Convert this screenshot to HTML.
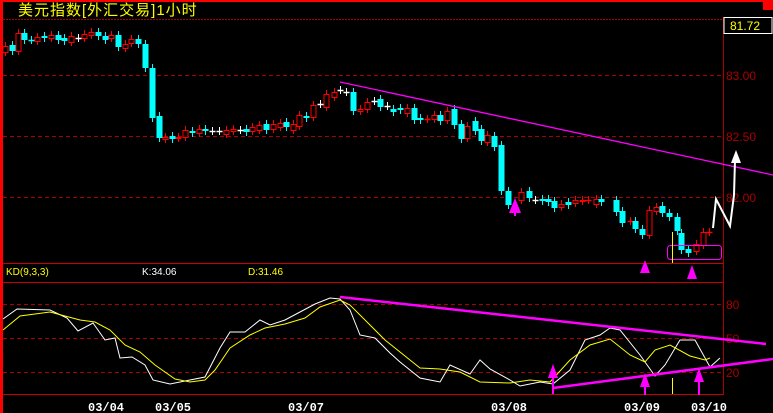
<!DOCTYPE html>
<html><head><meta charset="utf-8"><style>
html,body{margin:0;padding:0;background:#000;width:773px;height:413px;overflow:hidden}
svg{display:block}
</style></head><body>
<svg id="s" width="773" height="413" xmlns="http://www.w3.org/2000/svg" font-family="Liberation Sans, sans-serif">
<rect width="773" height="413" fill="#000"/>
<rect x="0" y="0" width="773" height="2" fill="#f00"/>
<rect x="763" y="0" width="10" height="10" fill="#f00"/>
<rect x="0" y="0" width="3" height="413" fill="#f00"/>
<text x="18" y="15" fill="#ff0" font-size="15" letter-spacing="1" font-family="Liberation Sans, Noto Sans CJK SC, sans-serif">美元指数[外汇交易]1小时</text>
<line x1="3" y1="19.5" x2="723" y2="19.5" stroke="#a00" stroke-dasharray="2,1"/>
<line x1="723.5" y1="17" x2="723.5" y2="395" stroke="#a00"/>
<rect x="724" y="17.5" width="48" height="16" fill="#000" stroke="#fff"/>
<text x="730" y="30" fill="#ff0" font-size="12">81.72</text>
<g stroke="#a00" stroke-dasharray="4,3">
<line x1="3" y1="75.5" x2="723" y2="75.5"/>
<line x1="3" y1="136.5" x2="723" y2="136.5"/>
<line x1="3" y1="197.5" x2="723" y2="197.5"/>
<line x1="3" y1="304.5" x2="723" y2="304.5"/>
<line x1="3" y1="338.5" x2="723" y2="338.5"/>
<line x1="3" y1="372.5" x2="723" y2="372.5"/>
</g>
<g fill="#a00" font-size="12">
<text x="726" y="80">83.00</text><text x="726" y="141">82.50</text><text x="726" y="202">82.00</text>
<text x="726" y="309">80</text><text x="726" y="343">50</text><text x="726" y="377">20</text>
</g>
<line x1="3" y1="263.5" x2="723" y2="263.5" stroke="#c00"/>
<line x1="3" y1="282.5" x2="723" y2="282.5" stroke="#c00"/>
<line x1="3" y1="394.5" x2="723" y2="394.5" stroke="#c00"/>
<text x="6" y="275" fill="#ff0" font-size="10">KD(9,3,3)</text>
<text x="142" y="275" fill="#fff" font-size="10">K:34.06</text>
<text x="248" y="275" fill="#ff0" font-size="10">D:31.46</text>
<g fill="#fff" font-size="12" font-weight="bold" font-family="Liberation Mono, monospace">
<text x="88" y="411">03/04</text><text x="155" y="411">03/05</text><text x="288" y="411">03/07</text>
<text x="491" y="411">03/08</text><text x="624" y="411">03/09</text><text x="691" y="411">03/10</text>
</g>
<g id="c"></g>
<line x1="340" y1="82" x2="773" y2="175" stroke="#f0f" stroke-width="1.3"/>
<polyline points="713,228 716,199 730,226 734,195 735,160" fill="none" stroke="#fff" stroke-width="2"/>
<polygon points="736,150 731,163 741,163" fill="#fff"/>
<rect x="667.5" y="245.5" width="54" height="14" rx="3" fill="none" stroke="#f0f"/>
<line x1="672.5" y1="232" x2="672.5" y2="263" stroke="#ff0"/>
<line x1="672.5" y1="378" x2="672.5" y2="394" stroke="#ff0"/>
<g fill="#f0f">
<polygon points="515,198 509,213 521,213"/><rect x="514" y="210" width="2" height="6"/>
<polygon points="645,260 640,273 650,273"/>
<polygon points="692,265 687,279 697,279"/>
</g>
<polyline id="K" fill="none" stroke="#fff" stroke-width="1"/>
<polyline id="D" fill="none" stroke="#ff0" stroke-width="1"/>
<line x1="340" y1="297" x2="766" y2="344" stroke="#f0f" stroke-width="2.5"/>
<line x1="553" y1="388" x2="773" y2="359" stroke="#f0f" stroke-width="2.5"/>
<g fill="#f0f">
<polygon points="553,364 548,378 558,378"/><rect x="552" y="377" width="2" height="17"/>
<polygon points="645,373 640,387 650,387"/><rect x="644" y="386" width="2" height="9"/>
<polygon points="699,368 694,382 704,382"/><rect x="698" y="381" width="2" height="14"/>
</g>
</svg>
<script>
var C=[[5,52,46,'r'],[12,51,45,'c'],[18,51,33,'r'],[24,33,40,'c'],[31,40,40,'c'],[37,41,37,'r'],[44,36,38,'c'],[51,38,35,'r'],[58,35,40,'c'],[64,38,41,'c'],[71,42,36,'r'],[78,38,38,'w'],[84,38,34,'r'],[91,35,32,'r'],[98,32,36,'c'],[105,36,40,'c'],[111,38,35,'r'],[118,35,47,'c'],[125,48,44,'r'],[131,43,39,'r'],[138,39,44,'c'],[145,44,68,'c'],[152,68,118,'c'],[159,116,138,'c'],[165,139,137,'r'],[172,136,139,'c'],[178,138,137,'r'],[185,137,130,'r'],[192,131,133,'c'],[199,133,129,'r'],[205,129,131,'c'],[212,131,131,'w'],[219,131,131,'w'],[226,134,130,'r'],[233,131,129,'r'],[240,130,130,'w'],[246,129,132,'c'],[252,131,127,'r'],[259,130,125,'r'],[266,124,130,'c'],[273,129,124,'r'],[280,127,123,'r'],[286,122,127,'c'],[293,130,124,'r'],[299,126,115,'r'],[306,116,118,'c'],[313,117,105,'r'],[320,104,104,'w'],[326,107,94,'r'],[334,97,92,'r'],[340,90,90,'w'],[346,92,92,'w'],[353,92,111,'c'],[360,111,109,'r'],[367,109,102,'r'],[374,101,101,'w'],[380,99,107,'c'],[387,106,106,'w'],[393,109,112,'c'],[400,108,110,'c'],[407,113,108,'r'],[414,108,120,'c'],[420,118,120,'c'],[427,119,119,'r'],[434,119,115,'r'],[440,115,121,'c'],[447,120,111,'r'],[454,109,125,'c'],[461,124,139,'c'],[467,138,126,'r'],[475,121,131,'c'],[481,129,141,'c'],[487,142,135,'r'],[494,136,147,'c'],[501,145,191,'c'],[508,191,205,'c'],[521,200,192,'r'],[529,191,198,'c'],[535,200,200,'w'],[542,199,201,'c'],[548,199,202,'c'],[554,201,208,'c'],[561,207,204,'r'],[568,202,205,'c'],[575,203,200,'r'],[582,201,200,'r'],[588,200,200,'r'],[596,204,199,'r'],[601,199,202,'c'],[616,200,212,'c'],[622,211,223,'c'],[630,221,221,'r'],[635,221,229,'c'],[642,229,235,'c'],[649,235,210,'r'],[656,211,207,'r'],[662,206,213,'c'],[669,213,217,'c'],[677,217,231,'c'],[681,233,250,'c'],[688,249,253,'c'],[696,251,244,'r'],[703,245,232,'r'],[709,232,232,'r']];
var h='';
C.forEach(function(d){var x=d[0],t=Math.min(d[1],d[2]),b=Math.max(d[1],d[2]);
var col=d[3]=='r'?'#f00':d[3]=='c'?'#0ff':'#fff';
h+='<line x1="'+(x+.5)+'" y1="'+(t-4)+'" x2="'+(x+.5)+'" y2="'+(b+4)+'" stroke="'+col+'"/>';
if(b-t<1){h+='<line x1="'+(x-2.5)+'" y1="'+(t+.5)+'" x2="'+(x+3.5)+'" y2="'+(t+.5)+'" stroke="'+col+'" stroke-width="1.5"/>';}
else if(d[3]=='r'){h+='<rect x="'+(x-2)+'" y="'+(t+.5)+'" width="5" height="'+(b-t)+'" fill="#000" stroke="#f00"/>';}
else{h+='<rect x="'+(x-2.5)+'" y="'+t+'" width="6" height="'+(b-t)+'" fill="#0ff"/>';}});
document.getElementById('c').innerHTML=h;
document.getElementById('K').setAttribute('points','3,319 17,309 50,310 67,318 78,331 93,323 105,340 115,338 120,358 132,357 145,365 153,380 170,384 185,381 205,377 220,348 230,332 245,332 260,320 270,325 285,320 300,312 315,304 330,298 340,299 350,310 360,335 375,338 390,353 400,362 420,378 440,382 450,365 470,374 480,360 490,369 510,380 520,386 540,382 553,384 570,370 585,340 600,335 610,328 620,330 640,355 655,376 665,365 680,340 695,340 710,367 720,358');
document.getElementById('D').setAttribute('points','3,330 20,316 50,312 80,320 95,322 110,330 125,345 140,352 155,365 175,379 190,382 205,380 215,370 230,348 250,335 265,328 285,324 305,318 320,307 340,300 350,305 365,320 385,340 400,352 420,368 440,369 460,372 480,382 510,383 530,380 550,382 570,360 590,345 610,339 630,355 645,362 655,350 670,345 690,356 705,360 710,358');
</script>
</body></html>
